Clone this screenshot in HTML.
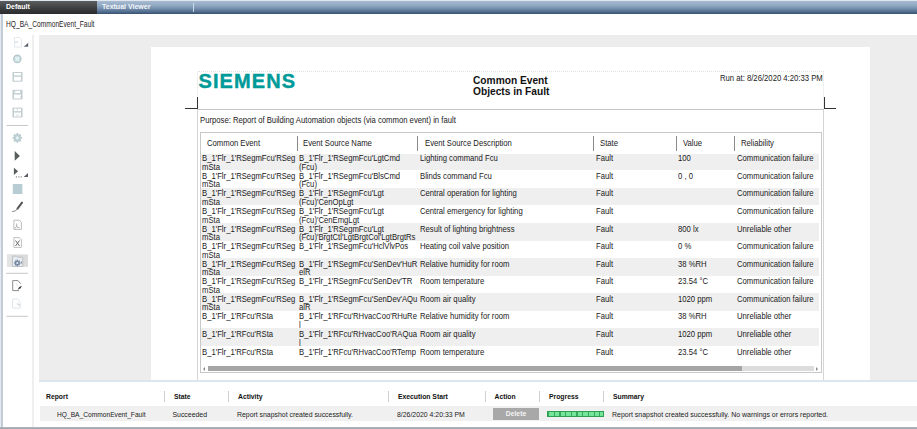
<!DOCTYPE html>
<html><head><meta charset="utf-8">
<style>
*{margin:0;padding:0;box-sizing:border-box}
html,body{width:917px;height:429px;overflow:hidden;background:#fff;font-family:"Liberation Sans",sans-serif;color:#222}
.a{position:absolute}
#topline{left:0;top:0;width:917px;height:1px;background:#dfe7ef}
#tabdef{left:0;top:1px;width:97px;height:13px;background:linear-gradient(#5b5d5e,#3a3c3d 60%,#2a2b2c)}
#tabbar{left:97px;top:1px;width:820px;height:13px;background:linear-gradient(#a7bbd2,#90a8c2 35%,#6c87a5 65%,#4a6585 88%,#35506e)}
.tabt{font-weight:bold;color:#fff;font-size:7px;top:3px;line-height:8px;white-space:nowrap}
#lborder{left:0;top:14px;width:2.5px;height:415px;background:linear-gradient(90deg,#e4eaf0 0 1.5px,#c3ccd6 1.5px)}
#title{left:5.5px;top:20.6px;font-size:8.2px;line-height:8px;color:#1e1e1e;white-space:nowrap;transform:scaleX(0.81);transform-origin:0 0}
#tbsep{left:32px;top:35px;width:2px;height:392px;background:#efefef}
#viewer{left:39px;top:35px;width:878px;height:346px;background:#ededed}
#vline{left:39px;top:380px;width:878px;height:2px;background:#dde6ee}
#page{left:151px;top:47px;width:719px;height:333px;background:#fff}
.d{font-size:8.2px;line-height:8.6px;white-space:nowrap;color:#1a1a1a;transform:scaleX(0.94);transform-origin:0 0}
.bh{top:392px;font-size:6.8px;line-height:9px;font-weight:bold;color:#111;white-space:nowrap}
.bs{top:391px;width:1px;height:11px;background:#d0d0d0}
.bd{top:410px;font-size:6.9px;line-height:9px;color:#222;white-space:nowrap}
</style></head><body>
<div class="a" id="topline"></div>
<div class="a" id="tabdef"></div>
<div class="a" id="tabbar"></div>
<div class="a tabt" style="left:6px">Default</div>
<div class="a tabt" style="left:102px;color:#f4f7fb">Textual Viewer</div>
<div class="a" style="left:193px;top:3px;width:1px;height:9px;background:#c8daec"></div>
<div class="a" id="lborder"></div>
<div class="a" id="title">HQ_BA_CommonEvent_Fault</div>
<div class="a" id="tbsep"></div>
<div class="a" id="viewer"></div>
<svg class="a" style="left:0;top:0" width="40" height="330" viewBox="0 0 40 330">
<!-- icon1 doc -->
<path d="M14.5 37.5h5l2 2v7.5h-7z" fill="none" stroke="#e3e8ec" stroke-width="1"/>
<rect x="15" y="41" width="3" height="2" fill="#e6eaee"/>
<path d="M28.2 42.7v4h-4.5z" fill="#5e6672"/>
<!-- icon2 circle -->
<circle cx="17.3" cy="58.9" r="4.3" fill="#b5c8cc"/>
<circle cx="17.3" cy="58.9" r="3" fill="#cfe3e6"/>
<path d="M15.6 57.2l3.4 3.4M19 57.2l-3.4 3.4" stroke="#e8f6f8" stroke-width="1.1"/>
<!-- save icons -->
<g fill="none" stroke="#c3cdd1" stroke-width="1">
<path d="M13.4 72.5h8.2v8.7h-8.2z"/>
<path d="M13.4 90.3h8.2v8.7h-8.2z"/>
<path d="M13.4 108.1h8.2v8.9h-8.2z"/>
</g>
<path d="M13 72v9.6M22 72v9.6M13 89.8v9.6M22 89.8v9.6M13 107.6v9.8M22 107.6v9.8" stroke="#b9c5ca" stroke-width="0.8"/>
<rect x="13.4" y="75.4" width="8.2" height="1.3" fill="#bccdc9"/>
<rect x="13.4" y="93.2" width="8.2" height="1.3" fill="#bccdc9"/>
<rect x="13.4" y="111.2" width="8.2" height="1.3" fill="#bccdc9"/>
<path d="M14.8 90.5v2.5M20.6 90.5v2.5M21 96v2" stroke="#bfcacf" stroke-width="0.8"/>
<path d="M17.4 108.4v2.2M15.6 114.2l1.8 1.6 1.8-1.6" stroke="#c2ccd0" stroke-width="0.8" fill="none"/>
<!-- separator -->
<rect x="6.5" y="125" width="21.5" height="1" fill="#c8c8c8"/>
<!-- gear -->
<g transform="translate(17.3 137.9)">
<circle r="3.6" fill="#bccdd1"/>
<path d="M-0.9 -4.8h1.8v9.6h-1.8zM-4.8 -0.9h9.6v1.8h-9.6z" fill="#bccdd1"/>
<path d="M-0.9 -4.8h1.8v9.6h-1.8zM-4.8 -0.9h9.6v1.8h-9.6z" fill="#bccdd1" transform="rotate(45)"/>
<circle r="1.6" fill="#e4f4f6"/>
</g>
<!-- play -->
<path d="M14.7 151v9.7l5.2-4.8z" fill="#575e5e"/>
<path d="M13.9 167.8v7.3l4.2-3.8z" fill="#575e5e"/>
<rect x="15.8" y="176.3" width="1.2" height="1.2" fill="#8a8080"/>
<rect x="18.2" y="176.3" width="1.2" height="1.2" fill="#8a8a8a"/>
<rect x="20.6" y="176.3" width="1.2" height="1.2" fill="#8a8a8a"/>
<path d="M28 172.9v4h-4.3z" fill="#555c66"/>
<!-- square -->
<rect x="12.8" y="184" width="9.6" height="10" fill="#b7ccd3"/>
<!-- pen -->
<path d="M22 202.6l-4.5 6" stroke="#555" stroke-width="2" stroke-linecap="round"/>
<path d="M17.6 208.6q-1.6 3-5.4 3" stroke="#777" stroke-width="0.9" fill="none"/>
<!-- pdf -->
<path d="M13.9 220.2h5.5l2 2.2v7h-7.5z" fill="none" stroke="#b5b5b5" stroke-width="0.9"/>
<path d="M16.7 223.5v3.2l-2.2 1.8M16.7 226.7l3 1.4" stroke="#9a9a9a" stroke-width="0.8" fill="none"/>
<!-- excel -->
<path d="M13.9 237.6h5.5l2 2.2v7.6h-7.5z" fill="none" stroke="#b8b8b8" stroke-width="0.9"/>
<path d="M15.5 240.5l4 5.5M19.5 240.5l-4 5.5" stroke="#6a6a6a" stroke-width="1"/>
<!-- selected -->
<rect x="7" y="254.4" width="21" height="12.4" fill="#dcdcdc"/>
<rect x="7" y="254.4" width="5" height="12.4" fill="#e3e3e3"/>
<path d="M12.5 256.2h4l1 1h5.3v9.3h-10.3z" fill="#e9ecef" stroke="#b4b9be" stroke-width="0.8"/>
<g transform="translate(17.3 263)">
<circle r="2.4" fill="#7489a3"/>
<path d="M-0.7 -3.2h1.4v6.4h-1.4zM-3.2 -0.7h6.4v1.4h-6.4z" fill="#7489a3"/>
<path d="M-0.7 -3.2h1.4v6.4h-1.4zM-3.2 -0.7h6.4v1.4h-6.4z" fill="#7489a3" transform="rotate(45)"/>
<circle r="1" fill="#eef2f6"/>
</g>
<rect x="21" y="261.5" width="1.2" height="2" fill="#8a96a4"/>
<!-- separator -->
<rect x="6" y="272.8" width="22" height="1" fill="#c8c8c8"/>
<!-- doc arrow -->
<path d="M12.7 280.6h5.4l2.6 3.2M12.7 280.6v10h6.5" fill="none" stroke="#8c8c8c" stroke-width="1"/>
<path d="M16 283.5l2 3" stroke="#d8d8d8" stroke-width="0.7"/>
<path d="M17.5 289.8l1.5-2.5 2.8-1.8-1 2.8z" fill="#444"/>
<!-- faint doc -->
<path d="M12.6 299h5.2l2.4 3v6h-7.6z" fill="none" stroke="#dde3e8" stroke-width="0.9"/>
<path d="M17 303.5l3 2" stroke="#cfd5da" stroke-width="1.4"/>
<!-- separator -->
<rect x="6.5" y="315.8" width="21.5" height="1" fill="#c8c8c8"/>
</svg>

<div class="a" id="vline"></div>
<div class="a" id="page"></div>

<!-- page header -->
<div class="a" style="left:198px;top:71px;width:626px;height:0;border-top:1px dotted #e2e2e2"></div>
<div class="a" style="left:197px;top:72px;width:1px;height:37px;background:#f0f0f0"></div><div class="a" style="left:197px;top:109px;width:1px;height:271px;background:#d4d4d4"></div>
<div class="a" style="left:823px;top:72px;width:1px;height:37px;background:#f0f0f0"></div><div class="a" style="left:823px;top:109px;width:1px;height:271px;background:#d4d4d4"></div>
<div class="a" style="left:198px;top:109px;width:626px;height:1px;background:#c4c4c4"></div>
<div class="a" style="left:197px;top:97px;width:1px;height:12px;background:#333"></div>
<div class="a" style="left:185px;top:108px;width:13px;height:1px;background:#333"></div>
<div class="a" style="left:824px;top:97px;width:1px;height:12px;background:#333"></div>
<div class="a" style="left:824px;top:108px;width:12px;height:1px;background:#333"></div>
<div class="a" id="siemens" style="left:198.5px;top:69.5px;font-size:20px;line-height:22px;font-weight:bold;color:#009a98;letter-spacing:1.1px;-webkit-text-stroke:0.4px #009a98;white-space:nowrap">SIEMENS</div>
<div class="a" style="left:473px;top:75px;font-size:10.2px;line-height:11px;font-weight:bold;color:#111;white-space:nowrap">Common Event<br>Objects in Fault</div>
<div class="a d" style="left:720px;top:75px">Run at: 8/26/2020 4:20:33 PM</div>
<div class="a d" style="left:199.5px;top:117px">Purpose: Report of Building Automation objects (via common event) in fault</div>
<!-- table -->
<div class="a" style="left:200px;top:132px;width:622px;height:241px;border:1px solid #c8c8c8"></div>
<div class="a d" style="left:207px;top:140px">Common Event</div>
<div class="a d" style="left:303px;top:140px">Event Source Name</div>
<div class="a d" style="left:424.5px;top:140px">Event Source Description</div>
<div class="a d" style="left:600px;top:140px">State</div>
<div class="a d" style="left:683px;top:140px">Value</div>
<div class="a d" style="left:741px;top:140px">Reliability</div>
<div class="a" style="left:297px;top:136px;width:1px;height:15px;background:#8a8a8a"></div>
<div class="a" style="left:417px;top:136px;width:1px;height:15px;background:#8a8a8a"></div>
<div class="a" style="left:593px;top:136px;width:1px;height:15px;background:#8a8a8a"></div>
<div class="a" style="left:675.5px;top:136px;width:1px;height:15px;background:#8a8a8a"></div>
<div class="a" style="left:733.5px;top:136px;width:1px;height:15px;background:#8a8a8a"></div>
<!--ROWS-->
<div class="a" style="left:201px;top:153.90px;width:618px;height:15.97px;background:#efefef"></div>
<div class="a" style="left:201px;top:187.84px;width:618px;height:17.57px;background:#efefef"></div>
<div class="a" style="left:201px;top:222.98px;width:618px;height:17.57px;background:#efefef"></div>
<div class="a" style="left:201px;top:258.12px;width:618px;height:17.57px;background:#efefef"></div>
<div class="a" style="left:201px;top:293.26px;width:618px;height:17.57px;background:#efefef"></div>
<div class="a" style="left:201px;top:328.40px;width:618px;height:17.57px;background:#efefef"></div>
<div class="a d" style="left:202px;top:155.30px">B_1'Flr_1'RSegmFcu'RSeg<br>mSta</div>
<div class="a d" style="left:299px;top:155.30px">B_1'Flr_1'RSegmFcu'LgtCmd<br>(Fcu)</div>
<div class="a d" style="left:420px;top:155.30px">Lighting command Fcu</div>
<div class="a d" style="left:595.5px;top:155.30px">Fault</div>
<div class="a d" style="left:678px;top:155.30px">100</div>
<div class="a d" style="left:736.5px;top:155.30px">Communication failure</div>
<div class="a d" style="left:202px;top:172.87px">B_1'Flr_1'RSegmFcu'RSeg<br>mSta</div>
<div class="a d" style="left:299px;top:172.87px">B_1'Flr_1'RSegmFcu'BlsCmd<br>(Fcu)</div>
<div class="a d" style="left:420px;top:172.87px">Blinds command Fcu</div>
<div class="a d" style="left:595.5px;top:172.87px">Fault</div>
<div class="a d" style="left:678px;top:172.87px">0 , 0</div>
<div class="a d" style="left:736.5px;top:172.87px">Communication failure</div>
<div class="a d" style="left:202px;top:190.44px">B_1'Flr_1'RSegmFcu'RSeg<br>mSta</div>
<div class="a d" style="left:299px;top:190.44px">B_1'Flr_1'RSegmFcu'Lgt<br>(Fcu)'CenOpLgt</div>
<div class="a d" style="left:420px;top:190.44px">Central operation for lighting</div>
<div class="a d" style="left:595.5px;top:190.44px">Fault</div>
<div class="a d" style="left:736.5px;top:190.44px">Communication failure</div>
<div class="a d" style="left:202px;top:208.01px">B_1'Flr_1'RSegmFcu'RSeg<br>mSta</div>
<div class="a d" style="left:299px;top:208.01px">B_1'Flr_1'RSegmFcu'Lgt<br>(Fcu)'CenEmgLgt</div>
<div class="a d" style="left:420px;top:208.01px">Central emergency for lighting</div>
<div class="a d" style="left:595.5px;top:208.01px">Fault</div>
<div class="a d" style="left:736.5px;top:208.01px">Communication failure</div>
<div class="a d" style="left:202px;top:225.58px">B_1'Flr_1'RSegmFcu'RSeg<br>mSta</div>
<div class="a d" style="left:299px;top:225.58px">B_1'Flr_1'RSegmFcu'Lgt<br>(Fcu)'BrgtCtl'LgtBrgtCol'LgtBrgtRs</div>
<div class="a d" style="left:420px;top:225.58px">Result of lighting brightness</div>
<div class="a d" style="left:595.5px;top:225.58px">Fault</div>
<div class="a d" style="left:678px;top:225.58px">800 lx</div>
<div class="a d" style="left:736.5px;top:225.58px">Unreliable other</div>
<div class="a d" style="left:202px;top:243.15px">B_1'Flr_1'RSegmFcu'RSeg<br>mSta</div>
<div class="a d" style="left:299px;top:243.15px">B_1'Flr_1'RSegmFcu'HclVlvPos</div>
<div class="a d" style="left:420px;top:243.15px">Heating coil valve position</div>
<div class="a d" style="left:595.5px;top:243.15px">Fault</div>
<div class="a d" style="left:678px;top:243.15px">0 %</div>
<div class="a d" style="left:736.5px;top:243.15px">Communication failure</div>
<div class="a d" style="left:202px;top:260.72px">B_1'Flr_1'RSegmFcu'RSeg<br>mSta</div>
<div class="a d" style="left:299px;top:260.72px">B_1'Flr_1'RSegmFcu'SenDev'HuR<br>elR</div>
<div class="a d" style="left:420px;top:260.72px">Relative humidity for room</div>
<div class="a d" style="left:595.5px;top:260.72px">Fault</div>
<div class="a d" style="left:678px;top:260.72px">38 %RH</div>
<div class="a d" style="left:736.5px;top:260.72px">Communication failure</div>
<div class="a d" style="left:202px;top:278.29px">B_1'Flr_1'RSegmFcu'RSeg<br>mSta</div>
<div class="a d" style="left:299px;top:278.29px">B_1'Flr_1'RSegmFcu'SenDev'TR</div>
<div class="a d" style="left:420px;top:278.29px">Room temperature</div>
<div class="a d" style="left:595.5px;top:278.29px">Fault</div>
<div class="a d" style="left:678px;top:278.29px">23.54 &deg;C</div>
<div class="a d" style="left:736.5px;top:278.29px">Communication failure</div>
<div class="a d" style="left:202px;top:295.86px">B_1'Flr_1'RSegmFcu'RSeg<br>mSta</div>
<div class="a d" style="left:299px;top:295.86px">B_1'Flr_1'RSegmFcu'SenDev'AQu<br>alR</div>
<div class="a d" style="left:420px;top:295.86px">Room air quality</div>
<div class="a d" style="left:595.5px;top:295.86px">Fault</div>
<div class="a d" style="left:678px;top:295.86px">1020 ppm</div>
<div class="a d" style="left:736.5px;top:295.86px">Communication failure</div>
<div class="a d" style="left:202px;top:313.43px">B_1'Flr_1'RFcu'RSta</div>
<div class="a d" style="left:299px;top:313.43px">B_1'Flr_1'RFcu'RHvacCoo'RHuRe<br>l</div>
<div class="a d" style="left:420px;top:313.43px">Relative humidity for room</div>
<div class="a d" style="left:595.5px;top:313.43px">Fault</div>
<div class="a d" style="left:678px;top:313.43px">38 %RH</div>
<div class="a d" style="left:736.5px;top:313.43px">Unreliable other</div>
<div class="a d" style="left:202px;top:331.00px">B_1'Flr_1'RFcu'RSta</div>
<div class="a d" style="left:299px;top:331.00px">B_1'Flr_1'RFcu'RHvacCoo'RAQua<br>l</div>
<div class="a d" style="left:420px;top:331.00px">Room air quality</div>
<div class="a d" style="left:595.5px;top:331.00px">Fault</div>
<div class="a d" style="left:678px;top:331.00px">1020 ppm</div>
<div class="a d" style="left:736.5px;top:331.00px">Unreliable other</div>
<div class="a d" style="left:202px;top:348.57px">B_1'Flr_1'RFcu'RSta</div>
<div class="a d" style="left:299px;top:348.57px">B_1'Flr_1'RFcu'RHvacCoo'RTemp</div>
<div class="a d" style="left:420px;top:348.57px">Room temperature</div>
<div class="a d" style="left:595.5px;top:348.57px">Fault</div>
<div class="a d" style="left:678px;top:348.57px">23.54 &deg;C</div>
<div class="a d" style="left:736.5px;top:348.57px">Unreliable other</div>
<!--/ROWS-->
<!-- scrollbar -->
<div class="a" style="left:208px;top:366px;width:606px;height:5px;background:#dcdcdc"></div>
<div class="a" style="left:208px;top:366px;width:534px;height:5px;background:#a5a5a5"></div>
<div class="a" style="left:203px;top:366.5px;width:0;height:0;border-top:2px solid transparent;border-bottom:2px solid transparent;border-right:2.5px solid #8a8a8a"></div>
<div class="a" style="left:816px;top:366.5px;width:0;height:0;border-top:2px solid transparent;border-bottom:2px solid transparent;border-left:2.5px solid #8a8a8a"></div>

<!-- bottom panel -->
<div class="a" style="left:40px;top:406px;width:877px;height:15px;background:#f0f0f0"></div>
<div class="a" style="left:0;top:427px;width:917px;height:2px;background:linear-gradient(#b4babf,#9aa2a9)"></div>
<div class="a bh" style="left:46px">Report</div>
<div class="a bh" style="left:174px">State</div>
<div class="a bh" style="left:238px">Activity</div>
<div class="a bh" style="left:398px">Execution Start</div>
<div class="a bh" style="left:494.5px">Action</div>
<div class="a bh" style="left:549px">Progress</div>
<div class="a bh" style="left:613px">Summary</div>
<div class="a bs" style="left:164px"></div>
<div class="a bs" style="left:228px"></div>
<div class="a bs" style="left:388px"></div>
<div class="a bs" style="left:484.5px"></div>
<div class="a bs" style="left:539px"></div>
<div class="a bs" style="left:602.5px"></div>
<div class="a bd" style="left:57px;font-size:6.65px">HQ_BA_CommonEvent_Fault</div>
<div class="a bd" style="left:172.5px">Succeeded</div>
<div class="a bd" style="left:237px">Report snapshot created successfully.</div>
<div class="a bd" style="left:397px">8/26/2020 4:20:33 PM</div>
<div class="a" style="left:493px;top:408px;width:46px;height:12px;background:#a8a8a8;color:#f4f4f4;font-size:6.8px;font-weight:bold;line-height:12px;text-align:center">Delete</div>
<div class="a" id="prog" style="left:547px;top:410.5px;width:57px;height:6.5px;border:1px solid #2f9e52;background:repeating-linear-gradient(90deg,#3aa85c 0 1.2px,#74e69a 1.2px 5.7px)"></div>
<div class="a bd" style="left:612px;font-size:6.98px">Report snapshot created successfully. No warnings or errors reported.</div>
</body></html>
